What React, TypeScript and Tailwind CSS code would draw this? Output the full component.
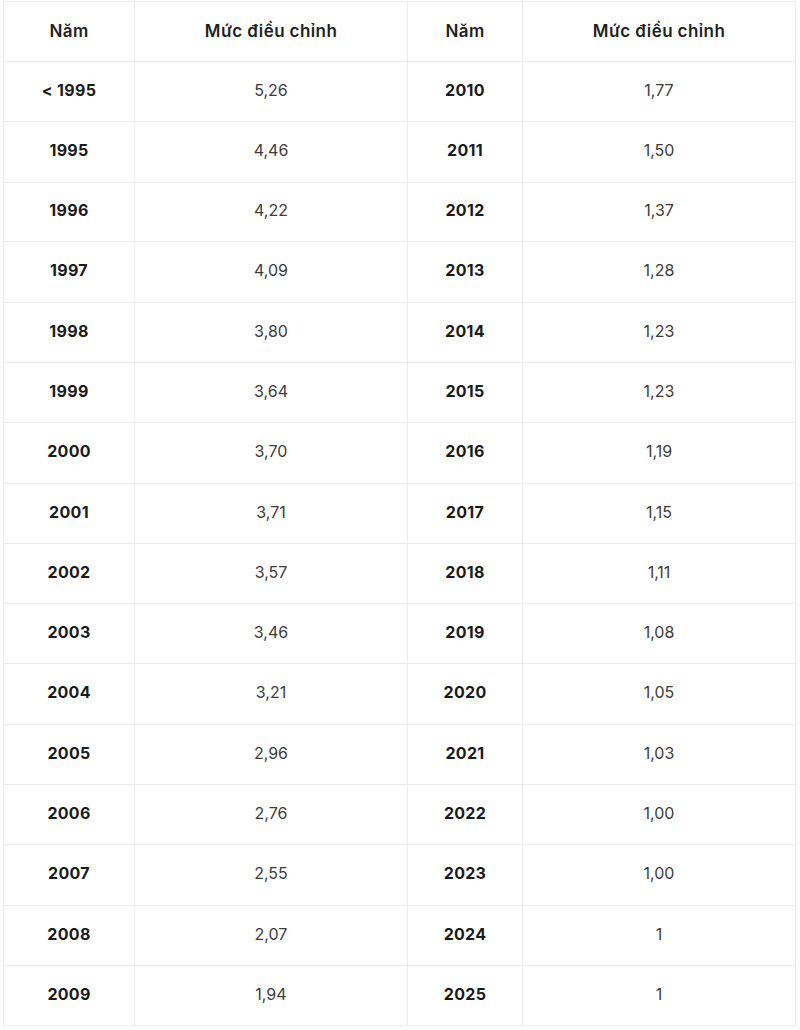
import React from "react";

const left: [string, string][] = [
  ["< 1995", "5,26"],
  ["1995", "4,46"],
  ["1996", "4,22"],
  ["1997", "4,09"],
  ["1998", "3,80"],
  ["1999", "3,64"],
  ["2000", "3,70"],
  ["2001", "3,71"],
  ["2002", "3,57"],
  ["2003", "3,46"],
  ["2004", "3,21"],
  ["2005", "2,96"],
  ["2006", "2,76"],
  ["2007", "2,55"],
  ["2008", "2,07"],
  ["2009", "1,94"],
];

const right: [string, string][] = [
  ["2010", "1,77"],
  ["2011", "1,50"],
  ["2012", "1,37"],
  ["2013", "1,28"],
  ["2014", "1,23"],
  ["2015", "1,23"],
  ["2016", "1,19"],
  ["2017", "1,15"],
  ["2018", "1,11"],
  ["2019", "1,08"],
  ["2020", "1,05"],
  ["2021", "1,03"],
  ["2022", "1,00"],
  ["2023", "1,00"],
  ["2024", "1"],
  ["2025", "1"],
];

const Cell: React.FC<{ children: React.ReactNode; kind: "head" | "year" | "value" }> = ({ children, kind }) => {
  const style =
    kind === "head"
      ? "text-[17px] tracking-[0.4px] font-semibold text-[#1f1f1f] pb-0"
      : kind === "year"
      ? "text-[16px] tracking-[0.3px] font-bold text-[#1a1a1a] pb-[4px]"
      : "text-[16px] font-normal text-[#3c3c3c] pb-[4px]";
  return (
    <div className={`bg-white flex items-center justify-center ${style}`}>
      {children}
    </div>
  );
};

export default function App() {
  return (
    <div className="w-[800px] h-[1030px] bg-white pt-px pl-[3px]" style={{ fontFamily: "Inter, 'Noto Sans', sans-serif" }}>
      <div className="w-[793px] grid grid-cols-[130px_272px_114px_272px] grid-rows-[59px_59px_60px_58px_60px_59px_59px_60px_59px_59px_59px_60px_59px_59px_60px_59px_59px] gap-px p-px bg-[#ececec]">
        <Cell kind="head">Năm</Cell>
        <Cell kind="head">Mức điều chỉnh</Cell>
        <Cell kind="head">Năm</Cell>
        <Cell kind="head">Mức điều chỉnh</Cell>
        {left.map((row, i) => (
          <React.Fragment key={row[0]}>
            <Cell kind="year">{row[0]}</Cell>
            <Cell kind="value">{row[1]}</Cell>
            <Cell kind="year">{right[i][0]}</Cell>
            <Cell kind="value">{right[i][1]}</Cell>
          </React.Fragment>
        ))}
      </div>
    </div>
  );
}
